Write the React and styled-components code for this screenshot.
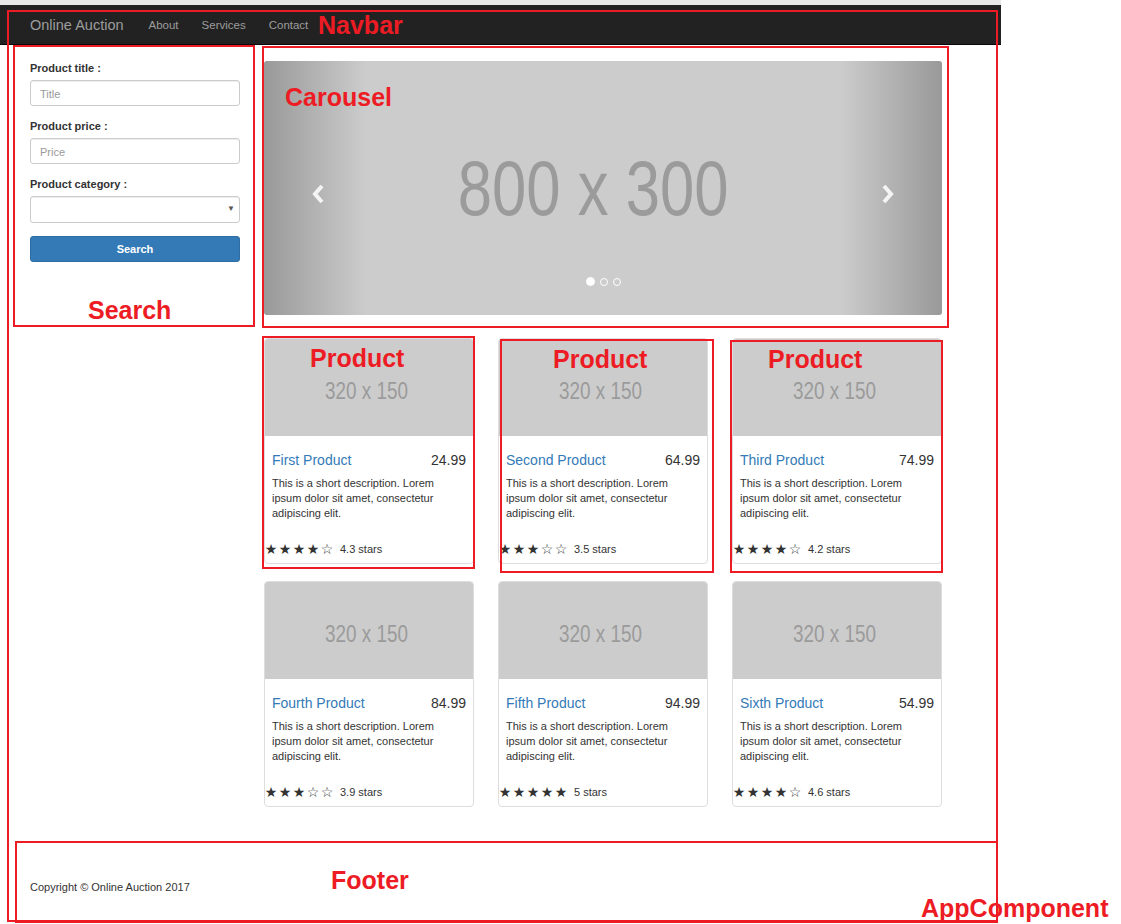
import React from "react";
import styled, { createGlobalStyle } from "styled-components";

const GlobalStyle = createGlobalStyle`
  body {
    margin: 0;
    background: #fff;
    color: #333;
    font-family: "Liberation Sans", Arial, sans-serif;
  }
  * { box-sizing: border-box; }
`;

const Page = styled.div`
  position: relative;
  width: 1121px;
  min-height: 924px;
  overflow: hidden;
`;

const Shell = styled.div`
  width: 1001px;
  border-top: 5px solid #e8e8e8;
`;

/* navbar */
const Navbar = styled.nav`
  height: 40px;
  background: #222;
  border-bottom: 1px solid #080808;
  display: flex;
  align-items: center;
  padding-left: 30px;
`;

const Brand = styled.a`
  font-size: 14.5px;
  color: #9d9d9d;
  margin-right: 25px;
`;

const NavLink = styled.a`
  font-size: 11.5px;
  color: #9d9d9d;
  margin-right: 23px;
`;

/* main layout */
const Main = styled.div`
  display: flex;
  gap: 24px;
  padding: 16px 0 0 30px;
`;

const Sidebar = styled.form`
  width: 210px;
`;

const FormGroup = styled.div`
  margin-bottom: 13px;
`;

const Label = styled.label`
  display: block;
  font-size: 11px;
  line-height: 15px;
  font-weight: bold;
  color: #333;
  margin-bottom: 4px;
`;

const Input = styled.input`
  display: block;
  width: 100%;
  height: 26px;
  border: 1px solid #ccc;
  border-radius: 3px;
  padding: 1px 9px 0;
  font-family: inherit;
  font-size: 11px;
  color: #555;
  box-shadow: inset 0 1px 1px rgba(0, 0, 0, 0.075);
  &::placeholder { color: #999; }
`;

const SelectWrap = styled.div`
  position: relative;
`;

const Select = styled.select`
  display: block;
  width: 100%;
  height: 27px;
  border: 1px solid #ccc;
  border-radius: 3px;
  background: #fff;
  appearance: none;
  box-shadow: inset 0 1px 1px rgba(0, 0, 0, 0.075);
`;

const Caret = styled.span`
  position: absolute;
  right: 5px;
  top: 8px;
  font-size: 8px;
  color: #555;
  pointer-events: none;
`;

const Button = styled.button`
  display: block;
  width: 100%;
  height: 26px;
  background: #337ab7;
  border: 1px solid #2e6da4;
  border-radius: 3px;
  color: #fff;
  font-family: inherit;
  font-size: 11px;
  font-weight: bold;
`;

const Content = styled.div`
  width: 678px;
`;

/* carousel */
const Carousel = styled.div`
  position: relative;
  height: 254px;
  background: #ccc;
  border-radius: 3px;
  overflow: hidden;
  display: flex;
  align-items: center;
  justify-content: center;
`;

const Placeholder = styled.span`
  display: inline-block;
  font-family: "Liberation Sans", Arial, sans-serif;
  font-size: ${(p) => p.$size}px;
  color: #9b9b9b;
  transform: scaleX(${(p) => p.$squeeze});
  white-space: nowrap;
`;

const SlideCaption = styled(Placeholder)`
  margin-right: 20px;
`;

const Control = styled.div`
  position: absolute;
  top: 0;
  bottom: 0;
  ${(p) => (p.$side === "left" ? "left: 3px;" : "right: 3px;")}
  width: 102px;
  padding-top: 12px;
  display: flex;
  align-items: center;
  justify-content: center;
`;

const Shade = styled.div`
  position: absolute;
  top: 0;
  bottom: 0;
  ${(p) => (p.$side === "left" ? "left: 0;" : "right: 0;")}
  width: 102px;
  background: linear-gradient(
    ${(p) => (p.$side === "left" ? "to right" : "to left")},
    rgba(0, 0, 0, 0.25) 0%,
    rgba(0, 0, 0, 0) 100%
  );
`;

const Indicators = styled.div`
  position: absolute;
  left: 0;
  right: 0;
  bottom: 29px;
  display: flex;
  justify-content: center;
  align-items: center;
  gap: 5px;
`;

const Dot = styled.span`
  width: ${(p) => (p.$active ? 9 : 8)}px;
  height: ${(p) => (p.$active ? 9 : 8)}px;
  border-radius: 50%;
  border: 1px solid #fff;
  background: ${(p) => (p.$active ? "#fff" : "transparent")};
`;

/* products */
const ProductGrid = styled.div`
  display: grid;
  grid-template-columns: repeat(3, 210px);
  column-gap: 24px;
  row-gap: 17px;
  margin-top: 23px;
`;

const Card = styled.div`
  border: 1px solid #ddd;
  border-radius: 4px;
  padding-bottom: 6px;
  background: #fff;
`;

const Thumb = styled.div`
  height: 97px;
  padding-top: 7px;
  background: #ccc;
  display: flex;
  align-items: center;
  justify-content: center;
  border-radius: 3px 3px 0 0;
`;

const ThumbText = styled(Placeholder)`
  margin-right: 4px;
`;

const Caption = styled.div`
  padding: 16px 7px 0 7px;
`;

const TitleRow = styled.div`
  display: flex;
  justify-content: space-between;
  font-size: 14px;
  line-height: 17px;
`;

const ProductName = styled.a`
  color: #337ab7;
`;

const Price = styled.span`
  color: #333;
`;

const Desc = styled.p`
  margin: 7px 0 0;
  max-width: 186px;
  font-size: 11px;
  line-height: 15px;
  color: #333;
`;

const Ratings = styled.div`
  display: flex;
  align-items: center;
  height: 16px;
  margin: 20px 0 0 -1px;
  font-size: 11px;
  color: #333;
`;

const Star = styled.span`
  width: 14px;
  text-align: center;
  font-family: "DejaVu Sans", sans-serif;
  font-size: 14px;
  line-height: 16px;
`;

const RatingText = styled.span`
  margin-left: 6px;
`;

/* footer */
const Footer = styled.footer`
  padding: 73px 0 0 30px;
  font-size: 11px;
  line-height: 15px;
  color: #333;
`;

/* red annotation overlay */
const RedBox = styled.div`
  position: absolute;
  left: ${(p) => p.$x}px;
  top: ${(p) => p.$y}px;
  width: ${(p) => p.$w}px;
  height: ${(p) => p.$h}px;
  border: 2px solid #ed1c24;
  pointer-events: none;
`;

const RedLabel = styled.span`
  position: absolute;
  left: ${(p) => p.$x}px;
  top: ${(p) => p.$y}px;
  font-family: "Liberation Sans", Arial, sans-serif;
  font-weight: bold;
  font-size: 25px;
  line-height: 1;
  color: #ed1c24;
  white-space: nowrap;
`;

const Chevron = ({ dir }) => (
  <svg width="16" height="22" viewBox="0 0 16 22">
    <polyline
      points={dir === "left" ? "12,3 5,11 12,19" : "4,3 11,11 4,19"}
      fill="none"
      stroke="#fff"
      strokeOpacity="0.85"
      strokeWidth="4"
      strokeLinejoin="miter"
    />
  </svg>
);

const products = [
  { name: "First Product", price: "24.99", rating: 4.3 },
  { name: "Second Product", price: "64.99", rating: 3.5 },
  { name: "Third Product", price: "74.99", rating: 4.2 },
  { name: "Fourth Product", price: "84.99", rating: 3.9 },
  { name: "Fifth Product", price: "94.99", rating: 5 },
  { name: "Sixth Product", price: "54.99", rating: 4.6 },
];

const Stars = ({ rating }) => {
  const full = Math.floor(rating);
  return [1, 2, 3, 4, 5].map((i) => (
    <Star key={i}>{i <= full ? "★" : "☆"}</Star>
  ));
};

const ProductCard = ({ product }) => (
  <Card>
    <Thumb>
      <ThumbText $size={23} $squeeze={0.82}>320 x 150</ThumbText>
    </Thumb>
    <Caption>
      <TitleRow>
        <ProductName>{product.name}</ProductName>
        <Price>{product.price}</Price>
      </TitleRow>
      <Desc>
        This is a short description. Lorem ipsum dolor sit amet, consectetur
        adipiscing elit.
      </Desc>
    </Caption>
    <Ratings>
      <Stars rating={product.rating} />
      <RatingText>{product.rating} stars</RatingText>
    </Ratings>
  </Card>
);

export default function App() {
  return (
    <>
      <GlobalStyle />
      <Page>
        <Shell>
          <Navbar>
            <Brand>Online Auction</Brand>
            <NavLink>About</NavLink>
            <NavLink>Services</NavLink>
            <NavLink>Contact</NavLink>
          </Navbar>

          <Main>
            <Sidebar onSubmit={(e) => e.preventDefault()}>
              <FormGroup>
                <Label>Product title :</Label>
                <Input placeholder="Title" />
              </FormGroup>
              <FormGroup>
                <Label>Product price :</Label>
                <Input placeholder="Price" />
              </FormGroup>
              <FormGroup>
                <Label>Product category :</Label>
                <SelectWrap>
                  <Select />
                  <Caret>▼</Caret>
                </SelectWrap>
              </FormGroup>
              <Button type="submit">Search</Button>
            </Sidebar>

            <Content>
              <Carousel>
                <Shade $side="left" />
                <Shade $side="right" />
                <SlideCaption $size={77} $squeeze={0.8}>800 x 300</SlideCaption>
                <Control $side="left">
                  <Chevron dir="left" />
                </Control>
                <Control $side="right">
                  <Chevron dir="right" />
                </Control>
                <Indicators>
                  <Dot $active />
                  <Dot />
                  <Dot />
                </Indicators>
              </Carousel>

              <ProductGrid>
                {products.map((p) => (
                  <ProductCard key={p.name} product={p} />
                ))}
              </ProductGrid>
            </Content>
          </Main>

          <Footer>Copyright © Online Auction 2017</Footer>
        </Shell>

        <RedBox $x={7} $y={10} $w={991} $h={912} />
        <RedBox $x={13} $y={45} $w={242} $h={282} />
        <RedBox $x={262} $y={46} $w={687} $h={282} />
        <RedBox $x={262} $y={336} $w={213} $h={233} />
        <RedBox $x={500} $y={339} $w={214} $h={234} />
        <RedBox $x={730} $y={340} $w={213} $h={233} />
        <RedBox $x={15} $y={841} $w={983} $h={82} />

        <RedLabel $x={318} $y={13}>Navbar</RedLabel>
        <RedLabel $x={285} $y={85}>Carousel</RedLabel>
        <RedLabel $x={88} $y={298}>Search</RedLabel>
        <RedLabel $x={310} $y={346}>Product</RedLabel>
        <RedLabel $x={553} $y={347}>Product</RedLabel>
        <RedLabel $x={768} $y={347}>Product</RedLabel>
        <RedLabel $x={331} $y={868}>Footer</RedLabel>
        <RedLabel $x={921} $y={896}>AppComponent</RedLabel>
      </Page>
    </>
  );
}
